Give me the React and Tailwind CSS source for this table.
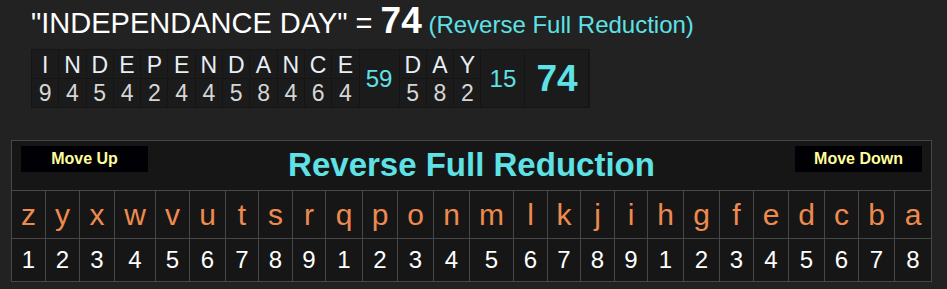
const FONT = "font-['Liberation_Sans',Arial,sans-serif]";

const WORD1 = [
  ["I", 9], ["N", 4], ["D", 5], ["E", 4], ["P", 2], ["E", 4],
  ["N", 4], ["D", 5], ["A", 8], ["N", 4], ["C", 6], ["E", 4],
];
const WORD2 = [["D", 5], ["A", 8], ["Y", 2]];

const CIPHER = [
  ["z", 1, 34], ["y", 2, 34], ["x", 3, 35], ["w", 4, 41], ["v", 5, 34], ["u", 6, 36],
  ["t", 7, 33], ["s", 8, 34], ["r", 9, 33], ["q", 1, 37], ["p", 2, 35], ["o", 3, 36],
  ["n", 4, 36], ["m", 5, 44], ["l", 6, 34], ["k", 7, 33], ["j", 8, 34], ["i", 9, 33],
  ["h", 1, 36], ["g", 2, 36], ["f", 3, 34], ["e", 4, 35], ["d", 5, 36], ["c", 6, 34],
  ["b", 7, 36], ["a", 8, 36],
];

function Word({ letters }) {
  return (
    <div className="flex">
      {letters.map(([ch, n], i) => (
        <div key={i} className="flex flex-col w-[27.3px] border-r border-[#151515]">
          <div className="h-[29px] flex items-center justify-center pt-[3px] text-[23px] leading-none text-[#e8eef5] border-b border-[#151515]">
            {ch}
          </div>
          <div className="h-[28px] flex items-center justify-center text-[23px] leading-none text-[#d6d6d6]">
            {n}
          </div>
        </div>
      ))}
    </div>
  );
}

function SumCell({ value, width, big }) {
  return (
    <div
      className={`${width} flex items-center justify-center border-r border-[#151515] text-[#5ee2e6] leading-none ${
        big ? "text-[37px] font-bold" : "text-[24px]"
      }`}
    >
      {value}
    </div>
  );
}

function MoveButton({ label }) {
  return (
    <div className="w-[127px] h-[26px] bg-[#000005] flex items-center justify-center text-[16px] font-bold text-[#ffff99] leading-none">
      {label}
    </div>
  );
}

export default function App() {
  return (
    <div className={`${FONT} bg-[#222222] w-[947px] h-[289px] overflow-hidden`}>
      {/* heading */}
      <div className="flex items-baseline pl-[31px] pt-[2px] text-white whitespace-pre">
        <span className="text-[29px] leading-none">"INDEPENDANCE DAY" = </span>
        <span className="text-[37px] font-bold leading-none">74</span>
        <span className="text-[24px] leading-none text-[#5ee2e6]"> (Reverse Full Reduction)</span>
      </div>

      {/* word breakdown */}
      <div className="ml-[31px] mt-[10px] inline-flex bg-[#1b1b1b] border border-[#151515] h-[59px]">
        <Word letters={WORD1} />
        <SumCell value="59" width="w-[40px]" />
        <Word letters={WORD2} />
        <SumCell value="15" width="w-[44px]" />
        <SumCell value="74" width="w-[64px]" big />
      </div>

      {/* cipher table */}
      <div className="ml-[11px] mt-[32px] w-[921px] border border-[#474747] bg-[#161616]">
        <div className="h-[50px] grid grid-cols-[127px_1fr_127px] px-[9px] border-b border-[#474747]">
          <div className="pt-[5px]">
            <MoveButton label="Move Up" />
          </div>
          <div className="self-center text-center text-[33px] font-bold leading-none text-[#5ee2e6] pb-[2px]">
            Reverse Full Reduction
          </div>
          <div className="pt-[5px]">
            <MoveButton label="Move Down" />
          </div>
        </div>
        <div className="flex">
          {CIPHER.map(([ch, n, w], i) => (
            <div
              key={i}
              style={{ width: w }}
              className={`flex flex-col ${i < CIPHER.length - 1 ? "border-r border-[#474747]" : ""}`}
            >
              <div className="h-[48px] flex items-center justify-center text-[30px] leading-none text-[#ef8a4f] border-b border-[#474747]">
                {ch}
              </div>
              <div className="h-[42px] flex items-center justify-center text-[24px] leading-none text-white">
                {n}
              </div>
            </div>
          ))}
        </div>
      </div>
    </div>
  );
}
